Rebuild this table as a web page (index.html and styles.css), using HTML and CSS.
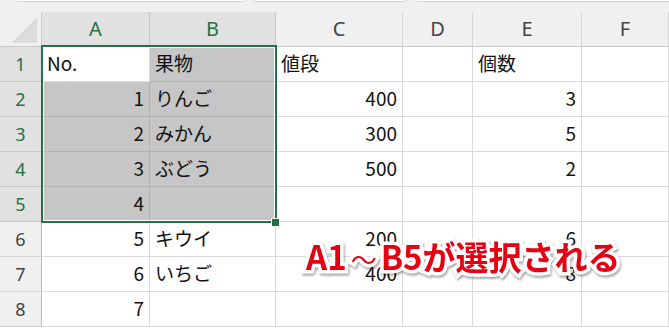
FILE: index.html
```html
<!DOCTYPE html>
<html lang="ja">
<head>
<meta charset="utf-8">
<link rel="stylesheet" href="styles.css">
</head>
<body>
<div class="app">
  <div class="topbar">
    <div class="tb tb1"></div>
    <div class="tb tb2"></div>
    <div class="tb tb3"></div>
  </div>
  <div class="sheet">
    <div class="grid">
      <div class="corner"><svg width="42" height="34" viewBox="0 0 42 34"><polygon points="38,5 38,31 12,31" fill="#dcdcdc"/></svg></div>
      <div class="ch sel">A</div>
      <div class="ch sel">B</div>
      <div class="ch">C</div>
      <div class="ch">D</div>
      <div class="ch">E</div>
      <div class="ch">F</div>

      <div class="rh sel">1</div>
      <div class="c active">No.</div>
      <div class="c s">果物</div>
      <div class="c">値段</div>
      <div class="c"></div>
      <div class="c">個数</div>
      <div class="c"></div>

      <div class="rh sel">2</div>
      <div class="c s n">1</div>
      <div class="c s">りんご</div>
      <div class="c n">400</div>
      <div class="c"></div>
      <div class="c n">3</div>
      <div class="c"></div>

      <div class="rh sel">3</div>
      <div class="c s n">2</div>
      <div class="c s">みかん</div>
      <div class="c n">300</div>
      <div class="c"></div>
      <div class="c n">5</div>
      <div class="c"></div>

      <div class="rh sel">4</div>
      <div class="c s n">3</div>
      <div class="c s">ぶどう</div>
      <div class="c n">500</div>
      <div class="c"></div>
      <div class="c n">2</div>
      <div class="c"></div>

      <div class="rh sel">5</div>
      <div class="c s n sb">4</div>
      <div class="c s sb"></div>
      <div class="c"></div>
      <div class="c"></div>
      <div class="c"></div>
      <div class="c"></div>

      <div class="rh">6</div>
      <div class="c n">5</div>
      <div class="c">キウイ</div>
      <div class="c n">200</div>
      <div class="c"></div>
      <div class="c n">6</div>
      <div class="c"></div>

      <div class="rh">7</div>
      <div class="c n">6</div>
      <div class="c">いちご</div>
      <div class="c n">400</div>
      <div class="c"></div>
      <div class="c n">8</div>
      <div class="c"></div>

      <div class="rh">8</div>
      <div class="c n">7</div>
      <div class="c"></div>
      <div class="c"></div>
      <div class="c"></div>
      <div class="c"></div>
      <div class="c"></div>
    </div>
    <div class="selection"></div>
    <div class="handle"></div>
    <div class="note">A1<span class="tilde">～</span>B5が選択される</div>
  </div>
</div>
</body>
</html>
```
FILE: styles.css
```css
* { box-sizing: border-box; }
html, body { margin: 0; padding: 0; background: #ffffff; }
.app { width: 669px; height: 329px; overflow: hidden; position: relative; }

.topbar {
  height: 12px;
  background: #f0f0f0;
  position: relative;
}
.tb {
  position: absolute;
  top: -8px;
  height: 10px;
  background: #ffffff;
  border: 1px solid #d4d4d4;
  border-radius: 4px;
}
.tb1 { left: 14px; width: 232px; }
.tb2 { left: 252px; width: 156px; }
.tb3 { left: 414px; width: 270px; }

.sheet { position: relative; }

.grid {
  display: grid;
  grid-template-columns: 42px 108px 126px 127px 70px 109px 1fr;
  grid-template-rows: 35px repeat(8, 35px);
  font-family: "Noto Sans CJK JP", "Noto Sans", sans-serif;
}

.corner {
  background: #f0f0f0;
  border-right: 1px solid #c8c8c8;
  border-bottom: 1px solid #c8c8c8;
  display: flex;
}
.corner svg { display: block; }

.ch {
  background: #f0f0f0;
  color: #444444;
  font-family: "Noto Sans", sans-serif;
  font-size: 20px;
  display: flex;
  align-items: center;
  justify-content: center;
  border-right: 1px solid #d5d5d5;
  border-bottom: 1px solid #c8c8c8;
  padding-bottom: 1px;
}
.ch.sel { background: #e1e1e1; color: #217346; border-right-color: #c4c4c4; }

.rh {
  background: #f0f0f0;
  color: #444444;
  font-family: "Noto Sans", sans-serif;
  font-size: 18px;
  display: flex;
  align-items: center;
  justify-content: center;
  border-right: 1px solid #bdbdbd;
  border-bottom: 1px solid #d5d5d5;
}
.rh.sel { background: #e1e1e1; color: #217346; border-bottom-color: #c8c8c8; }

.c {
  border-right: 1px solid #dadada;
  border-bottom: 1px solid #dadada;
  font-size: 19px;
  color: #111111;
  display: flex;
  align-items: center;
  padding: 0 5px 3px 5px;
  white-space: nowrap;
}
.c.n { justify-content: flex-end; }
.c.s { background: #c6c6c6; border-color: #b1b1b1; }
.c.active { background: #ffffff; }

.selection {
  position: absolute;
  left: 41px;
  top: 33px;
  width: 236px;
  height: 178px;
  border: 2px solid #217346;
  box-shadow: inset 0 0 0 1px #ffffff;
  pointer-events: none;
}
.handle {
  position: absolute;
  left: 271px;
  top: 206px;
  width: 9px;
  height: 9px;
  background: #217346;
  border: 1px solid #ffffff;
}

.note {
  position: absolute;
  left: 306px;
  top: 224px;
  font-family: "Noto Sans CJK JP", sans-serif;
  font-weight: 700;
  font-size: 33px;
  line-height: 40px;
  color: #e50012;
  -webkit-text-stroke: 7px #ffffff;
  paint-order: stroke fill;
  filter: drop-shadow(1px 2px 1px rgba(0,0,0,0.35));
  white-space: nowrap;
}
.tilde { font-size: 26px; font-weight: 400; margin: 0 4px; }
```
